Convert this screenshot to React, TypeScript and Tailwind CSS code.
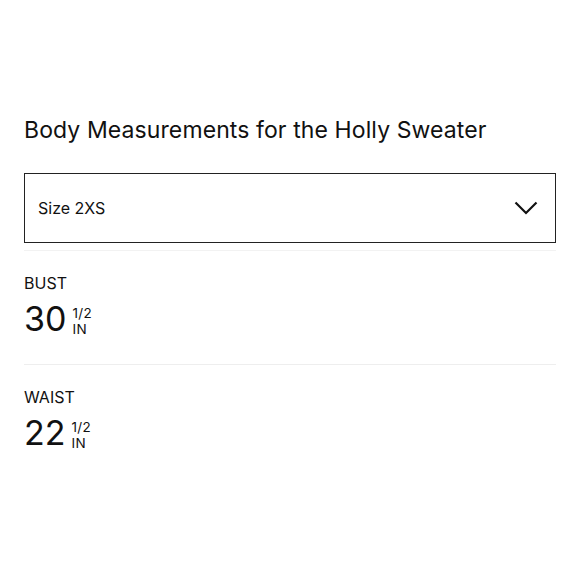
import React from 'react';

const measurements = [
  { label: 'BUST', value: '30', frac: '1/2' },
  { label: 'WAIST', value: '22', frac: '1/2' },
];

const Chevron = () => (
  <svg width="24" height="14" viewBox="0 0 24 14" fill="none">
    <path d="M1.5 1.5 L12 12 L22.5 1.5" stroke="#111" strokeWidth="2.2" />
  </svg>
);

export default function App() {
  return (
    <div
      className="w-[580px] h-[580px] bg-white text-[#111] px-6 pt-[114px]"
      style={{ fontFamily: 'Inter, "Noto Sans", sans-serif' }}
    >
      <h1 className="text-[23px] leading-[32px] font-normal tracking-[0.1px]">
        Body Measurements for the Holly Sweater
      </h1>
      <div className="mt-[27px] border-[1.5px] border-[#222] h-[70px] flex items-center justify-between pl-[13px] pr-[17px]">
        <span className="text-[16px]">Size 2XS</span>
        <Chevron />
      </div>
      <div className="mt-[7px] h-px bg-[#f2f2f2]" />
      {measurements.map((m, i) => (
        <div key={m.label}>
          {i > 0 && <div className="h-px bg-[#eeeeee]" />}
          <div className={i === 0 ? 'pt-[22px] pb-[28px]' : 'pt-[22px]'}>
            <div className="text-[16px] leading-[20px]">{m.label}</div>
            <div className="mt-[9px] flex items-end h-[34px]">
              <span className="text-[34px] leading-[34px]">{m.value}</span>
              <span className="ml-[6px] flex flex-col text-[13.5px] leading-[16px] -mb-[1px] tracking-[0.3px]">
                <span>{m.frac}</span>
                <span>IN</span>
              </span>
            </div>
          </div>
        </div>
      ))}
    </div>
  );
}
